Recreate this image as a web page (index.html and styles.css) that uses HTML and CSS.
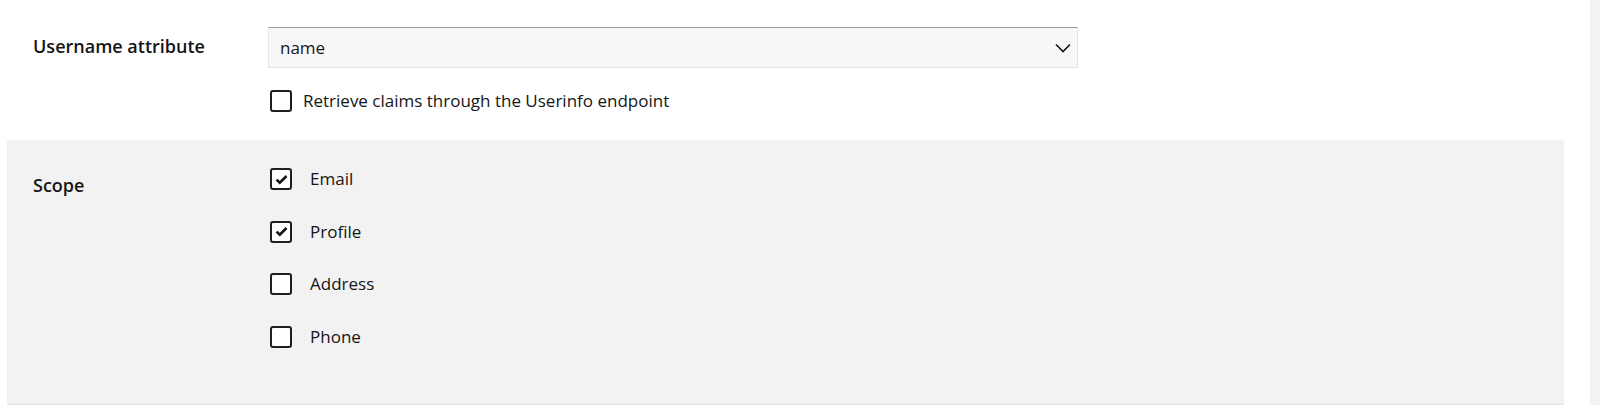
FILE: index.html
```html
<!DOCTYPE html>
<html>
<head>
    <meta charset="UTF-8">
    <title>Client settings</title>
    <link rel="stylesheet" href="styles.css">
</head>
<body>
<div class="page">
    <div class="main">
        <div class="row row-top">
            <div class="label">Username attribute</div>
            <div class="field">
                <div class="select">
                    <span>name</span>
                    <svg class="chevron" width="16" height="10" viewBox="0 0 16 10">
                        <path d="M1 1.5 L8 8.5 L15 1.5" fill="none" stroke="#151515" stroke-width="1.6"/>
                    </svg>
                </div>
                <label class="check check-tight">
                    <span class="box"></span>
                    <span>Retrieve claims through the Userinfo endpoint</span>
                </label>
            </div>
        </div>
        <div class="panel">
            <div class="row">
                <div class="label label-scope">Scope</div>
                <div class="field list">
                    <label class="check">
                        <span class="box"><svg width="13" height="11" viewBox="0 0 13 11"><path d="M1.5 5.6 L4.8 8.7 L11.5 2" fill="none" stroke="#151515" stroke-width="2.6"/></svg></span>
                        <span>Email</span>
                    </label>
                    <label class="check">
                        <span class="box"><svg width="13" height="11" viewBox="0 0 13 11"><path d="M1.5 5.6 L4.8 8.7 L11.5 2" fill="none" stroke="#151515" stroke-width="2.6"/></svg></span>
                        <span>Profile</span>
                    </label>
                    <label class="check">
                        <span class="box"></span>
                        <span>Address</span>
                    </label>
                    <label class="check">
                        <span class="box"></span>
                        <span>Phone</span>
                    </label>
                </div>
            </div>
        </div>
    </div>
    <div class="scrollbar"></div>
</div>
</body>
</html>
```

FILE: styles.css
```css
*{margin:0;padding:0;box-sizing:border-box;}
body{
    font-family: "Open Sans", "Liberation Sans", sans-serif;
    color:#151515;
    background:#fff;
    font-size:17px;
}
.page{
    display:flex;
    height:405px;
    overflow:hidden;
}
.main{
    width:1590px;
}
.scrollbar{
    width:10px;
    background:#f3f3f3;
    border-left:1px solid #ececec;
}
.row{
    display:grid;
    grid-template-columns: 235px 810px;
    padding-left:33px;
}
.row-top{
    padding-top:27px;
    padding-bottom:27px;
}
.label{
    font-size:18px;
    font-weight:600;
    line-height:24px;
    padding-top:7px;
}
.label-scope{
    padding-top:6px;
}
.field{
    display:flex;
    flex-direction:column;
    align-items:flex-start;
}
.select{
    width:810px;
    height:41px;
    display:flex;
    align-items:center;
    justify-content:space-between;
    padding:0 6px 0 11px;
    background:#f7f7f7;
    border:1px solid #e4e4e4;
    border-top-color:#9a9a9a;
}
.check{
    display:flex;
    align-items:center;
    gap:18px;
    line-height:24px;
    padding-left:2px;
}
.check-tight{
    gap:11px;
    margin-top:21px;
}
.box{
    width:22px;
    height:22px;
    border:2px solid #1f1f1f;
    border-radius:3px;
    background:#fff;
    display:flex;
    align-items:center;
    justify-content:center;
}
.panel{
    margin-left:7px;
    width:1557px;
    height:265px;
    background:#f2f2f2;
    border-top:1px solid #f7f7f7;
    border-bottom:1px solid #e2e2e2;
    padding-top:26px;
}
.panel .row{
    padding-left:26px;
}
.list{
    gap:28.5px;
}
```
